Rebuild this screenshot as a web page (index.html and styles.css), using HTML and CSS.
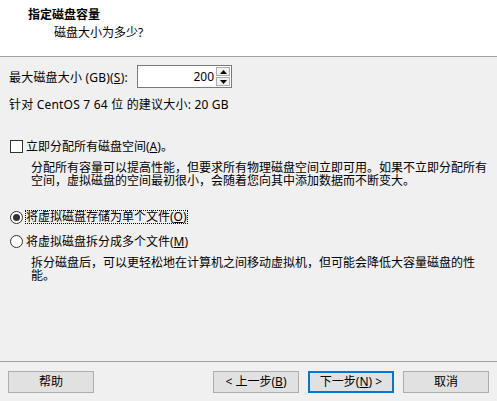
FILE: index.html
```html
<!DOCTYPE html>
<html lang="zh-CN">
<head>
  <meta charset="UTF-8">
  <title>新建虚拟机向导</title>
  <link rel="stylesheet" href="styles.css">
</head>
<body>
  <div class="dialog">

    <div class="header">
      <div class="title">指定磁盘容量</div>
      <div class="subtitle">磁盘大小为多少?</div>
    </div>

    <div class="content">
      <div class="size-row">
        <label for="tamanho">最大磁盘大小 (GB)(<u>S</u>):</label>
        <div class="spin">
          <input type="text" id="tamanho" value="200">
          <div class="spin-btns">
            <span class="spin-btn"><svg width="7" height="4" viewBox="0 0 7 4"><path d="M3.5 0 L7 4 L0 4 Z" fill="#000"/></svg></span>
            <span class="spin-btn"><svg width="7" height="4" viewBox="0 0 7 4"><path d="M0 0 L7 0 L3.5 4 Z" fill="#000"/></svg></span>
          </div>
        </div>
      </div>

      <p class="hint">针对 CentOS 7 64 位 的建议大小: 20 GB</p>

      <label class="option opt-alocar"><span class="checkbox"></span>立即分配所有磁盘空间(<u>A</u>)。</label>
      <p class="desc">分配所有容量可以提高性能，但要求所有物理磁盘空间立即可用。如果不立即分配所有空间，虚拟磁盘的空间最初很小，会随着您向其中添加数据而不断变大。</p>

      <label class="option opt-unico"><span class="radio checked"></span><span class="focus">将虚拟磁盘存储为单个文件(<u>O</u>)</span></label>
      <label class="option opt-multi"><span class="radio"></span>将虚拟磁盘拆分成多个文件(<u>M</u>)</label>
      <p class="desc">拆分磁盘后，可以更轻松地在计算机之间移动虚拟机，但可能会降低大容量磁盘的性能。</p>
    </div>

    <div class="footer">
      <button>帮助</button>
      <div class="spacer"></div>
      <button>&lt; 上一步(<u>B</u>)</button>
      <button class="default">下一步(<u>N</u>) &gt;</button>
      <button>取消</button>
    </div>

  </div>
</body>
</html>
```

FILE: styles.css
```css
* {
  box-sizing: border-box;
}

body {
  margin: 0;
  font-family: "Noto Sans", "Noto Sans CJK SC", sans-serif;
  font-size: 12px;
  color: #000;
  background-color: #f0f0f0;
}

.dialog {
  width: 497px;
  height: 401px;
  display: flex;
  flex-direction: column;
}

.header {
  height: 57px;
  background-color: #fff;
  border-bottom: 1px solid #a0a0a0;
  padding-top: 7px;
}

.title {
  font-weight: bold;
  line-height: 16px;
  padding-left: 28px;
}

.subtitle {
  line-height: 16px;
  padding-left: 54px;
  margin-top: 2px;
}

.content {
  flex: 1;
  padding: 8px 9px 0 9px;
}

.size-row {
  display: flex;
  align-items: center;
  gap: 5px;
  height: 23px;
}

.size-row label {
  width: 123px;
  letter-spacing: 0.2px;
}

.spin {
  display: flex;
  width: 95px;
  height: 23px;
  border: 1px solid #7a7a7a;
  background-color: #fff;
}

.spin input {
  flex: 1;
  min-width: 0;
  border: none;
  outline: none;
  padding: 0 2px 0 0;
  font-family: "Noto Sans", sans-serif;
  font-size: 12px;
  text-align: right;
  background: transparent;
}

.spin-btns {
  display: flex;
  flex-direction: column;
  width: 15px;
  padding: 1px 1px 1px 0;
  gap: 1px;
}

.spin-btn {
  flex: 1;
  display: flex;
  align-items: center;
  justify-content: center;
  background-color: #f0f0f0;
  border: 1px solid #adadad;
}

.hint {
  margin: 9px 0 0 0;
  line-height: 16px;
  letter-spacing: 0.2px;
}

.option {
  display: flex;
  align-items: center;
  height: 16px;
  padding-left: 1px;
}

.opt-alocar {
  margin-top: 25px;
}

.opt-unico {
  margin-top: 22px;
}

.opt-multi {
  margin-top: 8px;
}

.checkbox, .radio {
  width: 13px;
  height: 13px;
  border: 1px solid #333;
  background-color: #fff;
  margin-right: 3px;
  flex-shrink: 0;
}

.radio {
  border-radius: 50%;
  display: flex;
  align-items: center;
  justify-content: center;
}

.radio.checked::after {
  content: "";
  width: 7px;
  height: 7px;
  border-radius: 50%;
  background-color: #333;
}

.focus {
  outline: 1px dotted #000;
  line-height: 12px;
}

.desc {
  margin: 7px 0 0 22px;
  width: 456px;
  line-height: 13px;
}

.footer {
  height: 40px;
  border-top: 1px solid #a0a0a0;
  display: flex;
  align-items: flex-start;
  gap: 9px;
  padding: 9px 8px 0 8px;
}

.spacer {
  flex: 1;
}

button {
  width: 86px;
  height: 22px;
  padding: 0;
  font-family: "Noto Sans", "Noto Sans CJK SC", sans-serif;
  font-size: 12px;
  color: #000;
  background-color: #e1e1e1;
  border: 1px solid #adadad;
  line-height: 18px;
}

button.default {
  border: 2px solid #0078d7;
}
```
